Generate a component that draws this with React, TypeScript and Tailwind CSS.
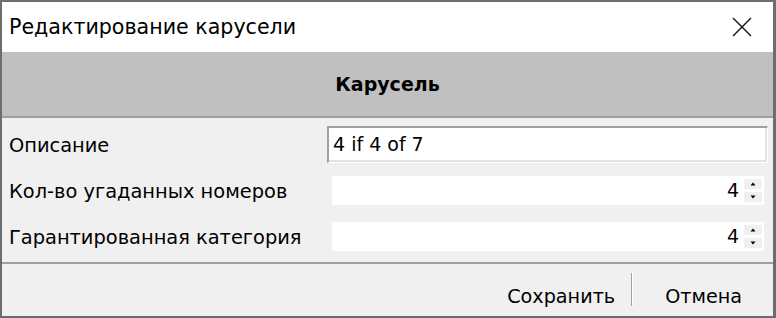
import React from 'react';

const font = { fontFamily: '"DejaVu Sans", "Liberation Sans", sans-serif' };

function SpinField({ value }: { value: string }) {
  return (
    <div className="flex h-[29px] w-[432px] items-center justify-end bg-white pr-[2px]">
      <span className="mr-[5px] text-[19px] leading-none text-black">{value}</span>
      <div className="flex flex-col gap-[3px]">
        <button className="flex h-[10px] w-[18px] items-center justify-center bg-[#f0f0f0]">
          <svg width="6" height="4" viewBox="0 0 6 4"><path d="M3 0.5 L5.5 3.5 L0.5 3.5 Z" fill="#000" /></svg>
        </button>
        <button className="flex h-[10px] w-[18px] items-center justify-center bg-[#f0f0f0]">
          <svg width="6" height="4" viewBox="0 0 6 4"><path d="M0.5 0.5 L5.5 0.5 L3 3.5 Z" fill="#000" /></svg>
        </button>
      </div>
    </div>
  );
}

export default function App() {
  return (
    <div className="h-[318px] w-[776px] overflow-hidden bg-[#6d6d6d]" style={font}>
      <div className="ml-[2px] mt-[2px] flex h-[314px] w-[771px] flex-col bg-[#f0f0f0] text-black">
        {/* title bar */}
        <div className="flex h-[50px] items-center justify-between bg-white pl-[7px] pr-[21px]">
          <span className="text-[20.6px]">Редактирование карусели</span>
          <svg width="20" height="20" viewBox="0 0 20 20">
            <path d="M1 1 L19 19 M19 1 L1 19" stroke="#111" strokeWidth="1.4" />
          </svg>
        </div>

        {/* group header */}
        <div className="flex h-[66px] items-center justify-center border-b-2 border-[#a0a0a0] bg-[#c0c0c0]">
          <span className="text-[19px] font-bold">Карусель</span>
        </div>

        {/* fields */}
        <div className="flex h-[144px] flex-col pt-[8px] text-[19.4px]">
          <div className="flex h-[37px] items-center">
            <span className="flex-1 pl-[7px] pt-[2px]">Описание</span>
            <div className="mr-[5px] flex h-[37px] w-[441px] items-center border-l-2 border-t-2 border-b border-r border-[#a0a0a0] border-b-white border-r-white bg-white">
              <div className="flex h-full w-full items-center border-b-2 border-r-2 border-[#e3e3e3] pl-[4px] text-[19px]">
                4 if 4 of 7
              </div>
            </div>
          </div>
          <div className="mt-[13px] flex h-[29px] items-center">
            <span className="flex-1 pl-[7px] pt-[2px]">Кол-во угаданных номеров</span>
            <div className="mr-[9px]">
              <SpinField value="4" />
            </div>
          </div>
          <div className="mt-[17px] flex h-[29px] items-center">
            <span className="flex-1 pl-[7px] pt-[2px]">Гарантированная категория</span>
            <div className="mr-[9px]">
              <SpinField value="4" />
            </div>
          </div>
        </div>

        {/* footer */}
        <div className="flex h-[54px] items-start justify-end border-t-2 border-[#a0a0a0] pr-[31px]">
          <div className="flex h-full items-start text-[19.2px]">
            <span className="mt-[19px]">Сохранить</span>
            <div className="ml-[16px] mt-[9px] h-[33px] w-[2px] border-l border-r border-[#a0a0a0] border-r-white" />
            <span className="ml-[32px] mt-[19px]">Отмена</span>
          </div>
        </div>
      </div>
    </div>
  );
}
